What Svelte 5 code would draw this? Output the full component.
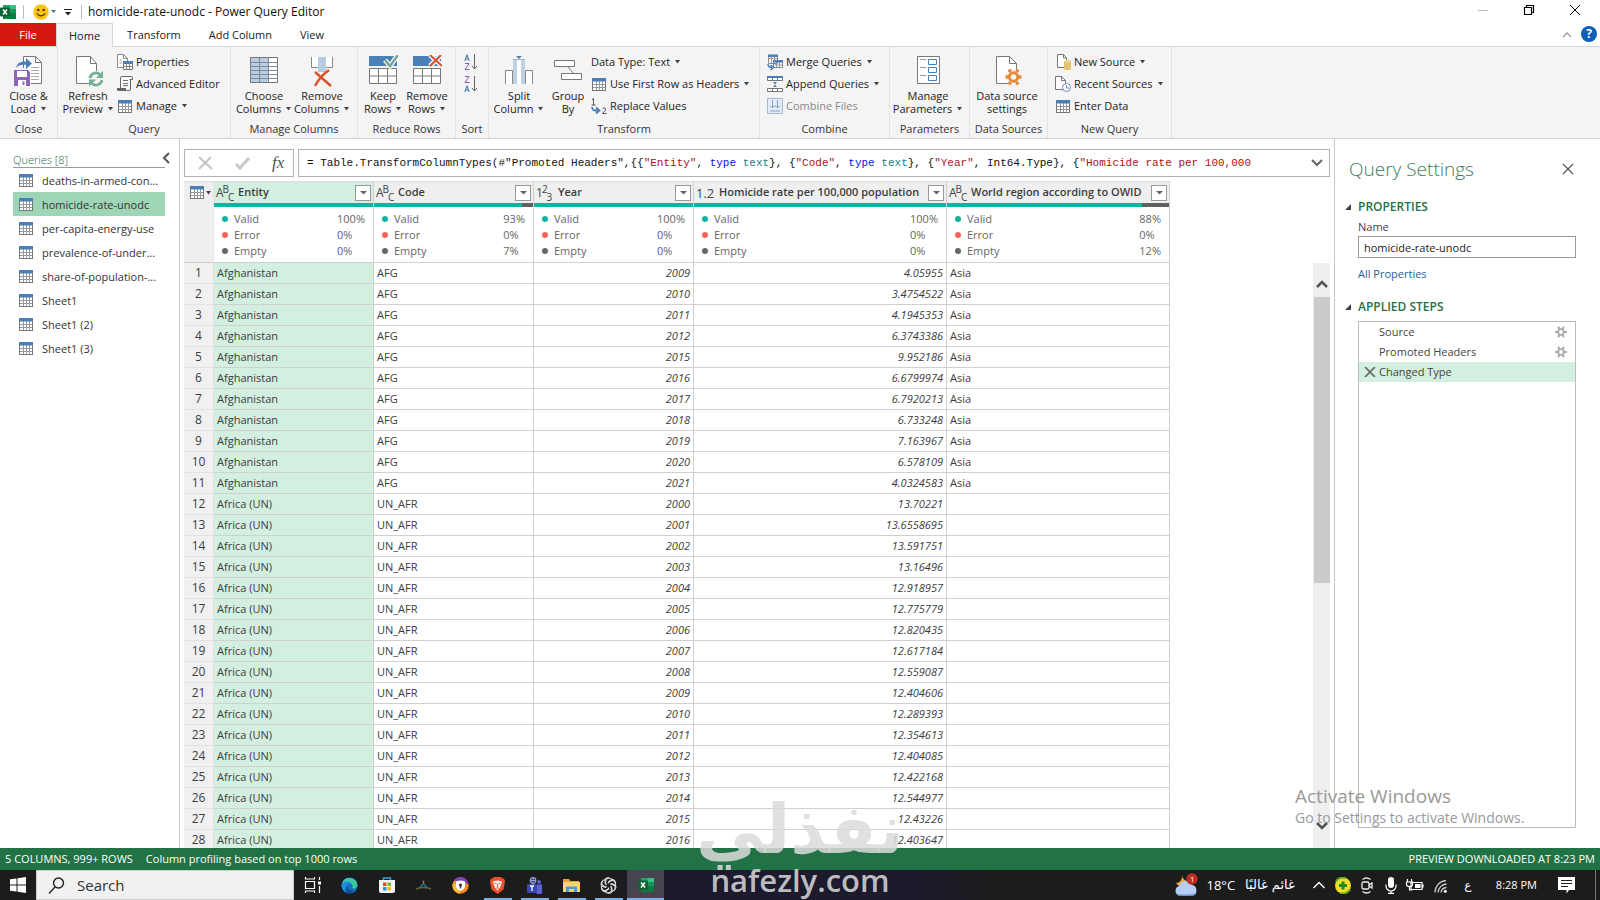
<script>
  const queries = [
    'deaths-in-armed-con...',
    'homicide-rate-unodc',
    'per-capita-energy-use',
    'prevalence-of-under...',
    'share-of-population-...',
    'Sheet1',
    'Sheet1 (2)',
    'Sheet1 (3)',
  ];
  let selected = $state(1);
  let queryName = $state('homicide-rate-unodc');
  let search = $state('');

  const columns = [
    { name: 'Entity', type: 'abc', valid: 100, empty: 0 },
    { name: 'Code', type: 'abc', valid: 93, empty: 7 },
    { name: 'Year', type: '123', valid: 100, empty: 0 },
    { name: 'Homicide rate per 100,000 population', type: '1.2', valid: 100, empty: 0 },
    { name: 'World region according to OWID', type: 'abc', valid: 88, empty: 12 },
  ];

  const afghan = [
    [2009, '4.05955'], [2010, '3.4754522'], [2011, '4.1945353'], [2012, '6.3743386'],
    [2015, '9.952186'], [2016, '6.6799974'], [2017, '6.7920213'], [2018, '6.733248'],
    [2019, '7.163967'], [2020, '6.578109'], [2021, '4.0324583'],
  ];
  const africa = [
    [2000, '13.70221'], [2001, '13.6558695'], [2002, '13.591751'], [2003, '13.16496'],
    [2004, '12.918957'], [2005, '12.775779'], [2006, '12.820435'], [2007, '12.617184'],
    [2008, '12.559087'], [2009, '12.404606'], [2010, '12.289393'], [2011, '12.354613'],
    [2012, '12.404085'], [2013, '12.422168'], [2014, '12.544977'], [2015, '12.43226'],
    [2016, '12.403647'],
  ];
  const rows = [
    ...afghan.map(([y, r]) => ['Afghanistan', 'AFG', y, r, 'Asia']),
    ...africa.map(([y, r]) => ['Africa (UN)', 'UN_AFR', y, r, '']),
  ];
</script>

{#snippet caret()}<svg class="caret" width="7" height="4" viewBox="0 0 7 4"><path d="M1 0h5L3.500 3.500z" fill="#444" /></svg>{/snippet}

{#snippet sheet()}
  <svg width="14" height="13" viewBox="0 0 14 13">
    <rect x=".5" y=".5" width="13" height="12" fill="#fff" stroke="#777" />
    <path d="M1 6.500h12M1 9.500h12M4.500 3v9M7.500 3v9M10.500 3v9" stroke="#999" fill="none" />
    <path d="M0 0h14v3.500H0z" fill="#4a7fb5" />
  </svg>
{/snippet}

{#snippet gear(color)}
  <svg width="12" height="12" viewBox="0 0 12 12" fill="none" stroke={color}>
    <circle cx="6" cy="6" r="2.800" stroke-width="1.700" />
    <path d="M4.500 3.500 3.200.8M7.500 3.500 8.800.8M4.500 8.500l-1.300 2.700M7.500 8.500l1.300 2.700M3 6H0M9 6h3" stroke-width="2" />
  </svg>
{/snippet}

{#snippet typeIcon(t)}
  {#if t === 'abc'}
    <span class="type">A<sup>B</sup><sub>C</sub></span>
  {:else if t === '123'}
    <span class="type">1<sup>2</sup><sub>3</sub></span>
  {:else}
    <span class="type dec">1.2</span>
  {/if}
{/snippet}

{#snippet excel()}
  <svg width="16" height="16" viewBox="0 0 16 16">
    <path d="M3 1h12a1 1 0 0 1 1 1v12a1 1 0 0 1-1 1H3z" fill="#21a366" />
    <path d="M9.500 1H15a1 1 0 0 1 1 1v3H9.500z" fill="#33c481" />
    <path d="M3 8h13v6a1 1 0 0 1-1 1H3z" fill="#107c41" />
    <path d="M9.500 5H16v4H9.500z" fill="#1a9259" />
    <rect x="0" y="3.500" width="10" height="9" rx="1" fill="#0d6335" />
    <path d="m3 5.500 4 5M7 5.500l-4 5" stroke="#fff" stroke-width="1.500" />
  </svg>
{/snippet}

<div class="window">
  <header class="titlebar">
    {@render excel()}
    <i class="vsep"></i>
    <svg class="smile" width="16" height="16" viewBox="0 0 16 16"><circle cx="8" cy="8" r="7.800" fill="#fcc419" /><circle cx="5.300" cy="6" r="1.200" fill="#4a3200" /><circle cx="10.700" cy="6" r="1.200" fill="#4a3200" /><path d="M3.700 9.300q4.300 5 8.600 0" fill="none" stroke="#4a3200" stroke-width="1.200" /></svg>
    <svg width="5" height="4" viewBox="0 0 5 4"><path d="M0 0h5L2.500 3z" fill="#3f7f73" /></svg>
    <svg class="quick" width="8" height="8" viewBox="0 0 8 8"><path d="M0 1.500h8" stroke="#222" /><path d="M1 4h6L4 7.500z" fill="#222" /></svg>
    <i class="vsep"></i>
    <h1>homicide-rate-unodc - Power Query Editor</h1>
    <div class="winbtns">
      <button aria-label="Minimize"><svg width="12" height="12" viewBox="0 0 12 12"><path d="M1 6.500h10" stroke="#bbb" /></svg></button>
      <button aria-label="Restore"><svg width="12" height="12" viewBox="0 0 12 12" fill="none" stroke="#000" stroke-width="1.200"><path d="M1.500 3.500h7v7h-7z" /><path d="M3.500 3V1.500h7v7H9" /></svg></button>
      <button aria-label="Close"><svg width="12" height="12" viewBox="0 0 12 12"><path d="m1 1 10 10M11 1 1 11" stroke="#000" /></svg></button>
    </div>
  </header>

  <nav class="tabs">
    <button class="file">File</button>
    <button class="active">Home</button>
    <button>Transform</button>
    <button>Add Column</button>
    <button>View</button>
    <span class="grow"></span>
    <button class="mini" aria-label="Collapse ribbon"><svg width="10" height="6" viewBox="0 0 10 6"><path d="m1 5 4-4 4 4" fill="none" stroke="#999" stroke-width="1.300" /></svg></button>
    <button class="help" aria-label="Help">?</button>
  </nav>

  <section class="ribbon">
    <div class="group g-close">
      <div class="body">
        <button class="big">
          <svg width="30" height="32" viewBox="0 0 30 32"><path d="M9.500 13V1.500h12l6 6v21H17" fill="#fff" stroke="#777" /><path d="M21.500 1.500v6h6" fill="none" stroke="#777" /><path d="M17 12.500h8M17 15.500h8M17 18.500h8M17 21.500h8M17 24.500h8" stroke="#aaa" /><path d="M2 13C3 8 7 6 12 6.500V3l6 5.500-6 5.500v-4C8 9.500 4 10 2 13z" fill="#4a80b8" /><path d="M0 15h14l2 2v14H0z" fill="#8e66b8" /><path d="M3 16h10v6H3z" fill="#fff" /><path d="M4 25h8v6H4z" fill="#fff" /><path d="M8.500 26.500h2V30h-2z" fill="#8e66b8" /></svg>
          <span>Close &amp;<br />Load {@render caret()}</span>
        </button>
      </div>
      <h2>Close</h2>
    </div>

    <div class="group g-query">
      <div class="body">
        <button class="big">
          <svg width="30" height="32" viewBox="-3 0 30 32"><path d="M.500 1.500h14l6 7v20h-20z" fill="#fff" stroke="#777" /><path d="M14.500 1.500v7h6" fill="none" stroke="#777" /><circle cx="20" cy="24" r="8" fill="#f5f4f5" /><path d="M14 23a6 6 0 0 1 10-3.500M26 25a6 6 0 0 1-10 3.500" fill="none" stroke="#74b092" stroke-width="2.800" /><path d="M27 16v7h-7zM13 31.500v-7h7z" fill="#74b092" /></svg>
          <span>Refresh<br />Preview {@render caret()}</span>
        </button>
        <div class="stack">
          <button><svg width="16" height="16" viewBox="0 0 16 16"><path d="M6 13.500H.500V.500h6l4 4V7" fill="#fff" stroke="#888" /><path d="M6.500.500v4h4M2.500 6h2M2.500 9h2" fill="none" stroke="#888" /><path d="M6.500 7.500h9v8h-9z" fill="#fff" stroke="#777" /><path d="M6 7h10v3H6z" fill="#4a7fb5" /><path d="M7 12.500h8M9.500 10v5M12.500 10v5" stroke="#888" /></svg>Properties</button>
          <button><svg width="16" height="16" viewBox="0 0 16 16"><path d="M3.500 12V2a1.500 1.500 0 0 1 1.500-1.500h9a1.500 1.500 0 0 1 1.500 1.500v1.500h-3M13.500 3v10a1.500 1.500 0 0 1-1.500 1.500" fill="#fff" stroke="#666" /><path d="M0 12h9v3H2a2 2 0 0 1-2-3z" fill="#666" /><path d="M6 4.500h5M6 7.500h5M6 9.500h5M9 14.500h4" stroke="#777" /></svg>Advanced Editor</button>
          <button><span class="ic">{@render sheet()}</span>Manage {@render caret()}</button>
        </div>
      </div>
      <h2>Query</h2>
    </div>

    <div class="group g-cols">
      <div class="body">
        <button class="big">
          <svg width="30" height="32" viewBox="0 0 30 32"><path d="M1.500 2.500h27v25h-27z" fill="#fff" stroke="#777" /><path d="M2 3h17v24H2z" fill="#b9cde2" /><path d="M1 7.500h28M1 11.500h28M1 15.500h28M1 19.500h28M1 23.500h28M10.500 3v24M19.500 3v24" stroke="#7c8894" fill="none" /></svg>
          <span>Choose<br />Columns {@render caret()}</span>
        </button>
        <button class="big">
          <svg width="30" height="32" viewBox="0 0 30 32"><path d="M4.500 2v10.500h7V2M18.500 2v10.500h7V2" fill="#fff" stroke="#888" /><path d="M11 2h8v15h-8z" fill="#b9cde2" /><path d="m8 17 16 14M22 15C15 20 11 25 8 31" fill="none" stroke="#d9512c" stroke-width="2.400" /></svg>
          <span>Remove<br />Columns {@render caret()}</span>
        </button>
      </div>
      <h2>Manage Columns</h2>
    </div>

    <div class="group g-rows">
      <div class="body">
        <button class="big">
          <svg width="30" height="32" viewBox="0 0 30 32"><path d="M1 1h28v10H1z" fill="#4a80b8" /><path d="M1.500 13.500h27v15h-27zM1 21h28M10.500 14v14M19.500 14v14" fill="#fff" stroke="#777" /><path d="m17 5 5 6 8-11" fill="none" stroke="#f5f4f5" stroke-width="5" /><path d="m17 5 5 6 8-11" fill="none" stroke="#74a892" stroke-width="2.400" /></svg>
          <span>Keep<br />Rows {@render caret()}</span>
        </button>
        <button class="big">
          <svg width="30" height="32" viewBox="0 0 30 32"><path d="M1 1h28v10H1z" fill="#4a80b8" /><path d="M1.500 13.500h27v15h-27zM1 21h28M10.500 14v14M19.500 14v14" fill="#fff" stroke="#777" /><path d="m18 0 12 11M29 0 18 11" stroke="#f5f4f5" stroke-width="5" /><path d="m18 0 12 11M29 0 18 11" stroke="#d9512c" stroke-width="2" /></svg>
          <span>Remove<br />Rows {@render caret()}</span>
        </button>
      </div>
      <h2>Reduce Rows</h2>
    </div>

    <div class="group g-sort">
      <div class="body">
        <div class="stack">
          <button class="sort" aria-label="Sort ascending"><svg width="14" height="16" viewBox="0 0 14 16"><path d="M.8 7 3 .8 5.200 7M1.500 5h3" fill="none" stroke="#3f74ad" /><path d="M1 9.500h4l-4 6h4.500" fill="none" stroke="#8a58b8" /><path d="M10.500 0v15M8 12l2.500 3 2.500-3" fill="none" stroke="#666" /></svg></button>
          <button class="sort" aria-label="Sort descending"><svg width="14" height="16" viewBox="0 0 14 16"><path d="M1 .5h4l-4 6h4.500" fill="none" stroke="#8a58b8" /><path d="M.8 16 3 9.800 5.200 16M1.500 14h3" fill="none" stroke="#3f74ad" /><path d="M10.500 0v15M8 12l2.500 3 2.500-3" fill="none" stroke="#666" /></svg></button>
        </div>
      </div>
      <h2>Sort</h2>
    </div>

    <div class="group g-transform">
      <div class="body">
        <button class="big split">
          <svg width="30" height="32" viewBox="0 0 30 32"><path d="M1.500 29V15.500h7V29M21.500 29V15.500h7V29" fill="#fff" stroke="#888" /><path d="M9.500 29V4.500h11V29" fill="#fff" stroke="#aab" /><path d="M9 5h4v24H9zM17 5h4v24h-4z" fill="#bfd2e4" /><path d="M12 1h6l-3 3z" fill="#4a80b8" /></svg>
          <span>Split<br />Column {@render caret()}</span>
        </button>
        <button class="big by">
          <svg width="30" height="32" viewBox="0 0 30 32"><path d="m14 11 7 8" stroke="#777" /><path d="M1.500 5.500h20v6h-20zM8.500 18.500h20v6h-20z" fill="#fff" stroke="#777" /></svg>
          <span>Group<br />By</span>
        </button>
        <div class="stack">
          <button>Data Type: Text {@render caret()}</button>
          <button><span class="ic">{@render sheet()}</span>Use First Row as Headers {@render caret()}</button>
          <button><svg width="16" height="16" viewBox="0 0 16 16" fill="none"><path d="M1 1.500 2.500.5V7M.5 7h4" stroke="#555" /><path d="M11.500 10.500q2-1.500 3 0t-3 5H15.500" stroke="#555" /><path d="M1 9c0 3.500 2 3.500 6 3.500M5 9.500l3.500 3L5 15.500" stroke="#4a80b8" stroke-width="1.800" /></svg>Replace Values</button>
        </div>
      </div>
      <h2>Transform</h2>
    </div>

    <div class="group g-combine">
      <div class="body">
        <div class="stack">
          <button><svg width="16" height="16" viewBox="0 0 16 16"><path d="M1.500 1.500h9v8h-9zM6.500 6.500h9v7h-9z" fill="#fff" stroke="#888" /><path d="M1 4.500h9M4.500 3v6M7.500 3v4M7 11h8M9.500 8v5M12.500 8v5" stroke="#999" fill="none" /><path d="M1 .500h10V3H1zM6 6h10v2.500H6z" fill="#4a7fb5" /><path d="M1 10c0 3 2 3.500 4 3.500M3.500 11l3 2.500-3 2.500" fill="none" stroke="#4a80b8" stroke-width="1.500" /></svg>Merge Queries {@render caret()}</button>
          <button><svg width="16" height="16" viewBox="0 0 16 16"><path d="M.500 1.500h15v3H.500zM.500 12.500h15v3H.500zM5.500 2v3M10.500 2v3M5.500 12v4M10.500 12v4" fill="#fff" stroke="#777" /><path d="M0 0h16v2H0zM6 6h4L8 8.500zM6 11h4L8 8.500z" fill="#4a7fb5" /></svg>Append Queries {@render caret()}</button>
          <button disabled><svg width="16" height="16" viewBox="0 0 16 16"><path d="M.500.500h15v15H.500z" fill="#e4ecf7" stroke="#a9b8cc" /><path d="M5.500 2v8M3 7.500 5.500 10 8 7.500M10.500 2v8M8 7.500l2.500 2.500L13 7.500M3 13h10" fill="none" stroke="#86a1c4" /></svg>Combine Files</button>
        </div>
      </div>
      <h2>Combine</h2>
    </div>

    <div class="group g-params">
      <div class="body">
        <button class="big">
          <svg width="30" height="32" viewBox="0 0 30 32"><path d="M4.500 1.500h22v27h-22z" fill="#fff" stroke="#777" /><path d="M7 4.500h6M7 12.500h6M7 20.500h6" stroke="#999" /><path d="M15.500 4.500h8v5h-8zM15.500 12.500h8v5h-8zM15.500 20.500h8v5h-8z" fill="#fff" stroke="#4a80b8" /></svg>
          <span>Manage<br />Parameters {@render caret()}</span>
        </button>
      </div>
      <h2>Parameters</h2>
    </div>

    <div class="group g-ds">
      <div class="body">
        <button class="big">
          <svg width="30" height="32" viewBox="0 0 30 32"><path d="M4.500 1.500h13l7 7v20h-20z" fill="#fff" stroke="#777" /><path d="M17.500 1.500v7h7" fill="none" stroke="#777" /><circle cx="21.500" cy="22" r="8" fill="#f5f4f5" /><circle cx="21.500" cy="22" r="4.200" fill="none" stroke="#e48a3c" stroke-width="3" /><path d="m18.500 17-1.500-2.500M24.500 17l1.500-2.500M18.500 27 17 29.500M24.500 27l1.500 2.500M16 22h-2.500M27 22h2.500" stroke="#e48a3c" stroke-width="3.400" /></svg>
          <span>Data source<br />settings</span>
        </button>
      </div>
      <h2>Data Sources</h2>
    </div>

    <div class="group g-new">
      <div class="body">
        <div class="stack">
          <button><svg width="16" height="16" viewBox="0 0 16 16"><path d="M2.500 13.500V.500h6l3 3.500v9.500z" fill="#fff" stroke="#777" /><path d="M8.500.500V4h3" fill="none" stroke="#777" /><path d="M9 7h7v8a3 1 0 0 1-7 0z" fill="#e5c06f" /><ellipse cx="12.500" cy="7" rx="3.500" ry="1.300" fill="#f0d694" /></svg>New Source {@render caret()}</button>
          <button><svg width="16" height="16" viewBox="0 0 16 16"><path d="M.500 13.500V.500h6l4 4v9z" fill="#fff" stroke="#777" /><path d="M6.500.500v4h4" fill="none" stroke="#777" /><circle cx="11.500" cy="11.500" r="4" fill="#fff" stroke="#6a8bb5" /><path d="M11.500 9v3H14" fill="none" stroke="#6a8bb5" /></svg>Recent Sources {@render caret()}</button>
          <button><span class="ic">{@render sheet()}</span>Enter Data</button>
        </div>
      </div>
      <h2>New Query</h2>
    </div>
  </section>

  <main>
    <aside class="queries">
      <div class="qhead"><span>Queries [8]</span>
        <button aria-label="Collapse queries"><svg width="8" height="12" viewBox="0 0 8 12"><path d="M7 1 2 6l5 5" fill="none" stroke="#555" stroke-width="2" /></svg></button>
      </div>
      <ul>
        {#each queries as q, i}
          <li><button class:sel={i === selected} onclick={() => (selected = i)}>{@render sheet()}<span>{q}</span></button></li>
        {/each}
      </ul>
    </aside>

    <section class="center">
      <div class="formula">
        <div class="ftools">
          <button aria-label="Cancel"><svg width="15" height="14" viewBox="0 0 15 14"><path d="m1 1 13 12M13 1 1 13" stroke="#c4c4c4" stroke-width="2" /></svg></button>
          <button aria-label="Accept"><svg width="15" height="14" viewBox="0 0 15 14"><path d="m1 8 4 4L14 2" fill="none" stroke="#c8c8c8" stroke-width="3" /></svg></button>
          <button class="fx" aria-label="Add step">fx</button>
        </div>
        <div class="fbox">
          <code>= Table.TransformColumnTypes(#"Promoted Headers",{'{{'}<s>"Entity"</s>, <b>type</b> <i>text</i>{'}, {'}<s>"Code"</s>, <b>type</b> <i>text</i>{'}, {'}<s>"Year"</s>, Int64.Type{'}, {'}<s>"Homicide rate per 100,000</s></code>
          <button aria-label="Expand formula bar"><svg width="12" height="8" viewBox="0 0 12 8"><path d="m1 1 5 5 5-5" fill="none" stroke="#666" stroke-width="2" /></svg></button>
        </div>
      </div>

      <div class="gridarea">
        <table>
          <colgroup><col class="c0" /><col class="c1" /><col class="c1" /><col class="c1" /><col class="c4" /><col class="c5" /></colgroup>
          <thead>
            <tr>
              <th class="corner"><div class="chead">{@render sheet()}{@render caret()}</div></th>
              {#each columns as c, i}
                <th class:hot={i === 0}>
                  <div class="chead">{@render typeIcon(c.type)}<span class="cname">{c.name}</span>
                    <button aria-label="Filter {c.name}"><svg width="7" height="4" viewBox="0 0 7 4"><path d="M0 0h7L3.500 3.500z" fill="#666" /></svg></button>
                  </div>
                  <div class="quality"><span style="width:{c.valid}%"></span></div>
                  <dl>
                    <dt class="v">Valid</dt><dd>{c.valid}%</dd>
                    <dt class="e">Error</dt><dd>0%</dd>
                    <dt class="n">Empty</dt><dd>{c.empty}%</dd>
                  </dl>
                </th>
              {/each}
            </tr>
          </thead>
          <tbody>
            {#each rows as r, i}
              <tr><td class="num">{i + 1}</td><td class="hot">{r[0]}</td><td>{r[1]}</td><td class="val">{r[2]}</td><td class="val">{r[3]}</td><td>{r[4]}</td></tr>
            {/each}
          </tbody>
        </table>
        <div class="scroll">
          <button aria-label="Scroll up"><svg width="12" height="9" viewBox="0 0 12 9"><path d="m1 8 5-5 5 5" fill="none" stroke="#555" stroke-width="2.600" /></svg></button>
          <div class="track"><div class="thumb"></div></div>
          <button class="down" aria-label="Scroll down"><svg width="12" height="9" viewBox="0 0 12 9"><path d="m1 1 5 5 5-5" fill="none" stroke="#555" stroke-width="2.600" /></svg></button>
        </div>
      </div>
    </section>

    <aside class="settings">
      <div class="shead"><h2>Query Settings</h2>
        <button aria-label="Close settings"><svg width="12" height="12" viewBox="0 0 12 12"><path d="m1 1 10 10M11 1 1 11" stroke="#555" stroke-width="1.200" /></svg></button>
      </div>
      <h3><svg width="6" height="6" viewBox="0 0 6 6"><path d="M6 0v6H0z" fill="#444" /></svg>PROPERTIES</h3>
      <label for="qname">Name</label>
      <input id="qname" type="text" bind:value={queryName} />
      <a href="#properties">All Properties</a>
      <h3 class="second"><svg width="6" height="6" viewBox="0 0 6 6"><path d="M6 0v6H0z" fill="#444" /></svg>APPLIED STEPS</h3>
      <ul class="steps">
        <li><span>Source</span><button aria-label="Edit Source">{@render gear('#aaa')}</button></li>
        <li><span>Promoted Headers</span><button aria-label="Edit Promoted Headers">{@render gear('#aaa')}</button></li>
        <li class="cur"><button aria-label="Delete step"><svg width="12" height="10" viewBox="0 0 12 10"><path d="m1 0 10 10M11 0 1 10" stroke="#666" stroke-width="1.700" /></svg></button><span>Changed Type</span></li>
      </ul>
    </aside>
  </main>

  <footer class="status">
    <span>5 COLUMNS, 999+ ROWS</span><span>Column profiling based on top 1000 rows</span>
    <span class="right">PREVIEW DOWNLOADED AT 8:23 PM</span>
  </footer>

  <footer class="taskbar">
    <button class="start" aria-label="Start"><svg width="16" height="16" viewBox="0 0 16 16" fill="#fff"><path d="M0 2.300 6.500 1.400v6.100H0zM7.500 1.200 16 0v7.500H7.500zM0 8.500h6.500v6.100L0 13.700zM7.500 8.500H16V16l-8.500-1.200z" /></svg></button>
    <label class="search"><svg width="17" height="17" viewBox="0 0 17 17" fill="none" stroke="#222" stroke-width="1.400"><circle cx="10.500" cy="6" r="5" /><path d="M7 10 1 16.500" /></svg><input type="text" placeholder="Search" aria-label="Search" bind:value={search} /></label>
    <div class="apps">
      <button aria-label="Task view"><svg width="18" height="16" viewBox="0 0 18 16" fill="none" stroke="#fff" stroke-width="1.200"><path d="M1.500 4.500h9v7h-9zM1.500 0v2h9V0M1.500 16v-2h9v2M15.500 0v3M15.500 9v7" /><path d="M14 4.500h3v3h-3z" fill="#fff" stroke="none" /></svg></button>
      <button aria-label="Edge"><svg width="17" height="17" viewBox="0 0 17 17"><circle cx="8.500" cy="8.500" r="8" fill="#1272c4" /><path d="M1 6.500A8 8 0 0 1 16.500 8c0 3-2.500 4-5.500 3 1-1 1-3-1-4.500-3-2-7-1-9 0z" fill="#3fc6a0" /><path d="M1 6.500C4 3 10 3.500 11 8c-2-2.500-5-1.500-5 1.500 0 3 3 5.500 8 4A8 8 0 0 1 .5 9z" fill="#1a8ee0" /><path d="M7 8.500c-1.500 3 2 6 6.500 5a8 8 0 0 1-5.500 3C3 15 4 9.500 7 8.500z" fill="#0e4f9c" /></svg></button>
      <button aria-label="Store"><svg width="16" height="16" viewBox="0 0 16 16"><path d="M4.500 4V1h7v3" fill="none" stroke="#2ba8e0" stroke-width="1.400" /><path d="M0 3h16v11a2 2 0 0 1-2 2H2a2 2 0 0 1-2-2z" fill="#f4f4f4" /><path d="M4 5.500h3.500V9H4z" fill="#e5502a" /><path d="M8.500 5.500H12V9H8.500z" fill="#7db928" /><path d="M4 10h3.500v3.500H4z" fill="#2196d8" /><path d="M8.500 10H12v3.500H8.500z" fill="#f7b614" /></svg></button>
      <button aria-label="Hanger"><svg width="17" height="12" viewBox="0 0 17 12" fill="none" stroke-width="1.400"><path d="M8.500 4V1.500" stroke="#a08040" /><path d="m5 8.500 3.500-4 3.500 4" stroke="#2d74a0" /><path d="M1 10.500c2-2 4-2 7.500-2s5.500 0 7.500 2" stroke="#6e6438" /></svg></button>
      <button aria-label="Privacy browser"><svg width="17" height="17" viewBox="0 0 17 17"><circle cx="8.500" cy="8.500" r="8.200" fill="#f08a24" /><path d="M2 3.500A8.200 8.200 0 0 1 16.500 7L9 5z" fill="#7c3fc4" /><path d="M1 6a8.200 8.200 0 0 0 7 10.700L6 9z" fill="#f9be32" /><path d="M4 4.500q4.500-2 9 0v5q-1 3.500-4.500 4.500Q5 13 4 9.500z" fill="#fff" /><circle cx="8.500" cy="8" r="1.500" fill="#333" /><path d="M7.800 8h1.400v3.500H7.800z" fill="#333" /></svg></button>
      <button class="run" aria-label="Brave"><svg width="15" height="17" viewBox="0 0 15 17"><path d="M4 0h7l1.500 1.500 1.500 0 1 3-1.500 8L7.500 17l-6-4.500L0 4.500l1-3h1.500z" fill="#f0512a" /><path d="M3 4.500 7.500 3.500l4.500 1-1 3.500-1 2.500-2.500 3-2.500-3L4 8z" fill="#fff" /><path d="m4.500 6 2 .8M10.500 6l-2 .8M7.500 7v3M6 11h3" stroke="#f0512a" stroke-width="1.100" /></svg></button>
      <button class="run" aria-label="Teams"><svg width="16" height="17" viewBox="0 0 16 17"><circle cx="12" cy="5" r="2" fill="#5560c9" /><circle cx="6" cy="3.500" r="2.800" fill="none" stroke="#9aa3e8" stroke-width="1.200" /><path d="M6 1v5M3.500 3.500h5" stroke="#9aa3e8" /><path d="M7 7.500h8v6a3 3 0 0 1-6 2z" fill="#5a64d0" /><rect y="7" width="10" height="9" rx="1" fill="#3d47b0" /><path d="M3 9h4M5 9v5" stroke="#fff" stroke-width="1.300" /></svg></button>
      <button class="run" aria-label="Files"><svg width="17" height="15" viewBox="0 0 17 15"><path d="M0 1h6l1.500 2H16v11H0z" fill="#e2a62e" /><path d="M0 4h17v10H0z" fill="#fbd66b" /><path d="M3 14V8.500h11V14h-3v-3H6v3z" fill="#3f9fdc" /></svg></button>
      <button class="run" aria-label="Assistant"><svg width="17" height="17" viewBox="-9 -9 18 18" fill="none" stroke="#ddd" stroke-width="1.200">{#each [0, 60, 120, 180, 240, 300] as a}<path transform="rotate({a})" d="M-3-1.700V-5A3.500 3.500 0 0 1 3.300-6.500L-.1-3.800V-2M3.300-6.500A3.500 3.500 0 0 1 7-3" />{/each}</svg></button>
      <button class="run open" aria-label="Excel">{@render excel()}</button>
    </div>
    <div class="tray">
      <svg class="weather" width="26" height="24" viewBox="0 0 26 24"><path d="M9 3c1 4 5 6 8 5-1 6-10 8-14 2 4 0 6-3 6-7z" fill="#f4a835" /><path d="M6 22.500a5 5 0 0 1 0-9.500 7 7 0 0 1 13-1 5.500 5.500 0 0 1 1 10.500z" fill="#b6cef4" /><path d="M3 20.500q10 2 20-.5-1 2.500-3 2.500H6q-2 0-3-2z" fill="#83a6e4" /><circle cx="19" cy="6" r="5.700" fill="#c02a20" /><text x="17" y="9" font-size="8" fill="#fff">1</text></svg>
      <span class="temp">18°C</span>
      <span class="sky" lang="ar" dir="rtl">غائم غالبًا</span>
      <svg width="24" height="17" viewBox="0 0 24 17"><path d="m6.500 11 5.500-5.500L17.500 11" fill="none" stroke="#fff" stroke-width="1.400" /></svg>
      <svg width="24" height="17" viewBox="0 0 24 17"><circle cx="12" cy="8.500" r="8" fill="#f2dc26" /><path d="M5 4.500a8 8 0 0 1 10-3.500M19 12.500A8 8 0 0 1 9 16" fill="none" stroke="#5aa82a" stroke-width="2" /><path d="M12 4.500v8M8 8.500h8" stroke="#1f8a2a" stroke-width="3" /></svg>
      <svg width="24" height="17" viewBox="0 0 24 17" fill="none" stroke="#eee" stroke-width="1.300"><rect x="7" y="5" width="7" height="7" rx="1.500" /><path d="m14 8 3-2v5l-3-2M7.500 2.500q4-3 8 0M7.500 14.500q4 3 8 0" /></svg>
      <svg width="24" height="17" viewBox="0 0 24 17"><rect x="9" y="0" width="6" height="11" rx="3" fill="#fff" /><path d="M7 7.500v1.500a5 5 0 0 0 10 0V7.500M12 14v3M9 16.300h6" fill="none" stroke="#fff" stroke-width="1.200" /></svg>
      <svg width="24" height="17" viewBox="0 0 24 17" fill="none" stroke="#fff" stroke-width="1.200"><path d="M8 5.500h11v7H8zM20 7.500v3" /><path d="M12 7h5.500v4H12z" fill="#fff" stroke="none" /><path d="M4.500 2v3M8.500 2v3M3.500 5h6v2.500q0 2-3 2t-3-2zM6.500 9v4H9" /></svg>
      <svg class="wifi" width="24" height="17" viewBox="0 0 24 17" fill="none" stroke="#ccc" stroke-width="1.300"><path d="M6 15.500A12 12 0 0 1 17 3.500M9 15.500a9 9 0 0 1 8.500-8.500M12 15.500A6 6 0 0 1 17.500 10.500" /><circle cx="16.300" cy="14.300" r="1.500" fill="#fff" stroke="none" /></svg>
      <span class="lang" lang="ar">ع</span>
      <time>8:28 PM</time>
      <svg class="note" width="17" height="17" viewBox="0 0 17 17"><path d="M0 0h17v13h-6l-2.500 3.500V13H0z" fill="#fff" /><path d="M3 3.500h11M3 6.500h11M3 9.500h7" stroke="#222" /></svg>
      <i class="edge"></i>
    </div>
  </footer>

  <div class="activate"><p>Activate Windows</p><span>Go to Settings to activate Windows.</span></div>
  <div class="brand"><span class="ar" lang="ar" dir="rtl">نفذلي</span><span class="en">nafezly.com</span></div>
</div>

<style>
  :global(body) { margin: 0; overflow: hidden; }
  .window { position: relative; height: 100vh; display: flex; flex-direction: column; background: #fff; color: #222; font: 11px/16px "Open Sans", "Noto Sans", sans-serif; overflow: hidden; }
  button { font: inherit; color: inherit; border: 0; padding: 0; background: none; display: flex; align-items: center; justify-content: center; white-space: nowrap; }
  h1, h2, h3, ul, dl, dd, p { margin: 0; padding: 0; font-weight: 400; }
  ul { list-style: none; }
  svg { flex: none; display: block; }
  .grow { flex: 1; }

  .titlebar { flex: none; height: 23px; display: flex; align-items: center; }
  .titlebar h1 { font-size: 12px; line-height: 20px; margin-left: 6px; color: #111; }
  .vsep { width: 1px; height: 14px; background: #bbb; margin-left: 7px; }
  .smile { margin: 0 2px 0 9px; }
  .quick { margin: 0 2px 0 8px; }
  .winbtns { margin-left: auto; display: flex; align-self: flex-start; margin-right: 2px; }
  .winbtns button { width: 46px; height: 20px; }

  .tabs { flex: none; height: 23px; display: flex; border-bottom: 1px solid #d6d6d6; }
  .tabs button { padding: 0 14px; height: 23px; }
  .tabs .file { width: 56px; background: #d4190f; color: #fff; padding: 0; }
  .tabs .active { padding: 0 12px; background: #f5f4f5; border: 1px solid #d6d6d6; border-bottom: 0; height: 24px; }
  .tabs .mini { width: 24px; padding: 0; }
  .tabs .help { width: 16px; height: 16px; margin: 3px 3px 0 2px; padding: 0; border-radius: 50%; background: #0c5fb8; color: #fff; font-weight: 700; font-size: 12px; }

  .ribbon { flex: none; height: 91px; display: flex; background: #f5f4f5; border-bottom: 1px solid #d0d0d0; }
  .group { box-sizing: border-box; flex: none; border-right: 1px solid #e2e2e2; display: flex; flex-direction: column; }
  .group .body { display: flex; height: 74px; }
  .group h2 { font-size: 11px; text-align: center; color: #333; }
  .g-close { width: 58px; } .g-query { width: 173px; } .g-cols { width: 127px; } .g-rows { width: 98px; } .g-sort { width: 33px; }
  .g-transform { width: 271px; } .g-combine { width: 130px; } .g-params { width: 80px; } .g-ds { width: 78px; } .g-new { width: 124px; }
  .big { flex-direction: column; justify-content: flex-start; width: 58px; padding-top: 8px; }
  .big span { line-height: 13px; margin-top: 2px; text-align: center; }
  .caret { display: inline-block; vertical-align: 2px; margin-left: 1px; }
  .g-query .body { padding-left: 1px; }
  .g-cols .body { padding-left: 4px; }
  .g-rows .body { padding-left: 3px; }
  .g-rows .big { width: 44px; }
  .g-params .big, .g-ds .big { width: 100%; padding-right: 3px; }
  .big.split { width: 60px; }
  .big.by { width: 38px; }
  .stack { display: flex; flex-direction: column; padding-top: 4px; }
  .stack button { height: 22px; gap: 3px; justify-content: flex-start; }
  .stack .ic { width: 16px; display: flex; justify-content: center; }
  .stack button:disabled { color: #888; }
  .g-transform .stack { padding-left: 4px; }
  .g-combine .stack { padding-left: 7px; }
  .g-new .stack { padding-left: 7px; }
  .g-sort .stack { padding-left: 8px; }

  main { flex: 1; min-height: 0; display: flex; }
  .queries { flex: none; width: 179px; border-right: 1px solid #c8c8c8; }
  .qhead { display: flex; justify-content: space-between; height: 29px; padding: 0 9px 0 13px; }
  .qhead span { align-self: flex-end; width: 152px; line-height: 15px; font-weight: 300; color: #1f6b48; border-bottom: 1px solid #999; }
  .qhead button { width: 8px; height: 38px; margin-left: -6px; }
  .queries ul { padding: 0 14px 0 13px; }
  .queries li button { width: 152px; height: 24px; padding: 1px 0 0 6px; gap: 9px; justify-content: flex-start; color: #333; }
  .queries li .sel { background: #9fd5b7; }

  .center { flex: 1; min-width: 0; display: flex; flex-direction: column; padding: 10px 4px 0; border-right: 1px solid #c8c8c8; }
  .formula { flex: none; display: flex; gap: 4px; }
  .ftools { box-sizing: border-box; width: 110px; height: 28px; border: 1px solid #b0b0b0; display: flex; align-items: center; gap: 22px; padding-left: 13px; }
  .fx { font: italic 17px/20px "Liberation Serif", serif; color: #555; }
  .fbox { box-sizing: border-box; flex: 1; min-width: 0; height: 28px; border: 1px solid #b0b0b0; display: flex; align-items: center; justify-content: space-between; padding: 0 6px 0 8px; }
  code { font: 11px/16px "Liberation Mono", monospace; color: #111; white-space: pre; overflow: hidden; }
  code s { text-decoration: none; color: #a31515; }
  code b { font-weight: 400; color: #1010e0; }
  code i { font-style: normal; color: #208080; }

  .gridarea { flex: 1; min-height: 0; margin-top: 4px; display: flex; justify-content: space-between; overflow: hidden; }
  table { table-layout: fixed; width: 986px; height: max-content; border-collapse: separate; border-spacing: 0; color: #3c3c3c; }
  .c0 { width: 30px; } .c1 { width: 160px; } .c4 { width: 253px; } .c5 { width: 223px; }
  th { padding: 0; font-weight: 400; text-align: left; vertical-align: top; border-right: 1px solid #d0d0d0; border-bottom: 1px solid #d0d0d0; }
  .chead { height: 22px; box-sizing: border-box; display: flex; align-items: center; background: #efefef; padding: 0 2px; border-top: 1px solid #dcdcdc; }
  .hot .chead { background: #d2efe0; }
  .corner { background: #f0eff0; border-right-color: #e6e6e6; }
  .corner .chead { padding-left: 6px; }
  .cname { flex: 1; font-weight: 600; line-height: 14px; padding-left: 6px; margin-bottom: 2px; white-space: nowrap; }
  .chead button { width: 16px; height: 16px; box-sizing: border-box; border: 1px solid #999; background: #fff; }
  .type { font-size: 12px; color: #444; width: 16px; display: flex; line-height: 18px; }
  .type sup, .type sub { font-size: 10px; line-height: 10px; }
  .type sup { margin-left: -1px; }
  .type sub { margin: 8px 0 0 -1px; }
  .type.dec { font-size: 13px; width: 17px; }
  .quality { height: 4px; background: #606060; }
  .quality span { display: block; height: 4px; background: #12b3a0; }
  dl { display: grid; grid-template-columns: 1fr auto; align-content: start; padding: 4px 8px 2px; line-height: 16px; color: #666; height: 49px; }
  dt::before { content: ""; display: inline-block; width: 6px; height: 6px; border-radius: 50%; margin-right: 6px; vertical-align: 1px; background: #666; }
  dt.v::before { background: #12b3a0; }
  dt.e::before { background: #fa6258; }
  td { box-sizing: border-box; height: 21px; padding: 0 3px; line-height: 16px; border-right: 1px solid #d0d0d0; border-bottom: 1px solid #d0d0d0; white-space: nowrap; }
  td.hot { background: #d2efe0; }
  td.num { background: #f1f0f1; text-align: center; padding: 0; font-size: 12px; border-color: #e2e2e2; }
  td.val { text-align: right; font-style: italic; }

  .scroll { flex: none; width: 17px; margin-top: 82px; background: #efefef; display: flex; flex-direction: column; }
  .scroll button { flex: none; height: 34px; padding-top: 6px; }
  .scroll .down { height: 40px; padding: 0 0 4px; }
  .track { flex: 1; }
  .thumb { height: 56%; margin-left: 1px; background: #cbcbcb; }

  .settings { flex: none; box-sizing: border-box; width: 265px; padding: 17px 24px 20px 14px; display: flex; flex-direction: column; }
  .shead { display: flex; justify-content: space-between; align-items: center; margin-right: 1px; }
  .shead h2 { font-size: 19px; line-height: 26px; font-weight: 300; color: #3a7d5c; }
  .shead button { width: 14px; }
  h3 { display: flex; align-items: center; gap: 7px; margin: 17px 0 0 -4px; font-size: 12px; font-weight: 600; color: #217346; }
  .settings label { margin: 4px 0 1px 9px; color: #444; }
  .settings input { margin-left: 9px; box-sizing: border-box; height: 22px; border: 1px solid #999; padding: 0 5px; font: inherit; color: #222; background: #fff; }
  .settings a { margin: 8px 0 0 9px; color: #2b5f9e; text-decoration: none; }
  .steps { flex: 1; margin: 6px 0 0 9px; border: 1px solid #bbb; }
  .steps li { display: flex; align-items: center; justify-content: space-between; height: 20px; padding: 0 8px 0 20px; color: #444; }
  .steps .cur { background: #d2efe0; justify-content: flex-start; gap: 3px; padding-left: 5px; }

  .status { flex: none; height: 22px; display: flex; align-items: center; gap: 13px; padding: 0 5px; background: #217346; color: #fff; }
  .status .right { margin-left: auto; }

  .taskbar { flex: none; height: 30px; display: flex; background: linear-gradient(90deg, #1c1c1c 610px, #1d1a2e 665px, #1d1a2e 900px, #1c1c1c 1000px); color: #fff; }
  .start { width: 36px; }
  .search { box-sizing: border-box; width: 258px; background: #f1f1f1; border: 1px solid #ccc; display: flex; align-items: center; gap: 12px; padding-left: 11px; }
  .search input { width: 180px; border: 0; padding: 0; background: none; font: 15px/20px "Open Sans", sans-serif; color: #333; }
  .search input::placeholder { color: #333; opacity: 1; }
  .apps { display: flex; }
  .apps button { width: 37px; height: 30px; position: relative; }
  .apps .run::after { content: ""; position: absolute; left: 5px; right: 4px; bottom: 0; height: 2px; background: #76b2e8; }
  .apps .open { background: #47444f; }
  .apps .open::after { left: 0; right: 0; }
  .tray { margin-left: auto; display: flex; align-items: center; font-size: 12px; }
  .temp { margin-left: 7px; font-size: 13px; }
  .sky { margin: 0 12px 0 10px; font-family: "DejaVu Sans", sans-serif; font-size: 13px; }
  .wifi { margin-left: 2px; }
  .lang { width: 30px; text-align: center; font-family: "DejaVu Sans", sans-serif; }
  time { margin: 0 21px 0 13px; font-size: 11px; }
  .edge { width: 1px; height: 30px; background: #777; margin: 0 4px 0 20px; }

  .activate { position: absolute; right: 40px; bottom: 72px; width: 265px; color: #999; pointer-events: none; white-space: nowrap; }
  .activate p { font-size: 19px; line-height: 24px; }
  .activate span { font-size: 14px; line-height: 20px; }
  .brand { position: absolute; left: 50%; bottom: 0; width: 220px; margin-left: -110px; text-align: center; pointer-events: none; color: rgba(218, 218, 218, .85); display: flex; flex-direction: column; align-items: center; }
  .brand .ar { font: 700 68px/80px "DejaVu Sans", sans-serif; margin-bottom: -10px; }
  .brand .en { font: 600 31px/40px "Open Sans", sans-serif; }
</style>
